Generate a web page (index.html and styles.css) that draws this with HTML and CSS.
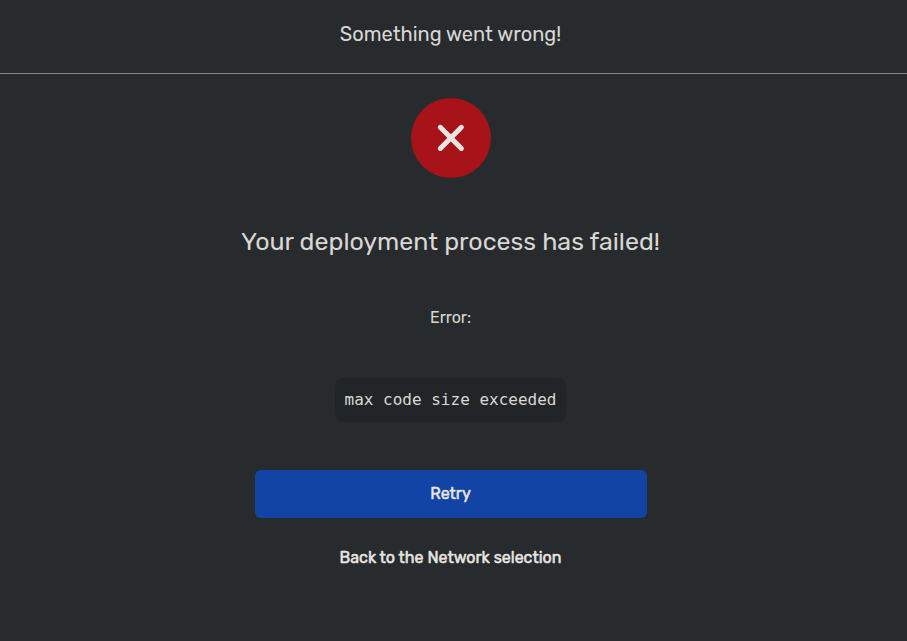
FILE: index.html
```html
<!DOCTYPE html>
<html lang="en">
<head>
<meta charset="utf-8">
<title>Something went wrong!</title>
<link rel="stylesheet" href="styles.css">
</head>
<body>
<header class="header"><h1 class="title">Something went wrong!</h1></header>
<main class="content">
<div class="status"><svg viewBox="0 0 80 80" width="80" height="80"><path d="M29.3 29.3L50.4 50.4M50.4 29.3L29.3 50.4"/></svg></div>
<h2 class="heading">Your deployment process has failed!</h2>
<p class="label">Error:</p>
<code class="message">max code size exceeded</code>
<button class="btn primary">Retry</button>
<button class="btn link">Back to the Network selection</button>
</main>
</body>
</html>
```
FILE: styles.css
```css
* { box-sizing: border-box; }
body { margin: 0; height: 641px; overflow: hidden; background: #282b2e; color: #d9d7d3; font-family: Rubik, Roboto, sans-serif; }
.header { height: 74px; padding: 22px 6px 0 0; border-bottom: 1px solid #8b867c; text-align: center; }
.title { margin: 0; font-size: 20px; line-height: 24px; font-weight: 400; }
.content { display: flex; flex-direction: column; align-items: center; padding: 24px 6px 0 0; }
.status { width: 80px; height: 80px; border-radius: 50%; background: #a71319; }
.status svg { display: block; fill: none; stroke: #e8e6e1; stroke-width: 5; stroke-linecap: round; }
.heading { margin: 48px 0 0; font-size: 25px; line-height: 32px; font-weight: 400; }
.label { margin: 50px 0 0; font-size: 16px; line-height: 20px; }
.message { width: 231px; height: 44px; margin-top: 50px; border-radius: 8px; background: #222527; font: 16px/44px "DejaVu Sans Mono", monospace; text-align: center; white-space: nowrap; }
.btn { width: 392px; height: 48px; border: 0; border-radius: 6px; padding: 0 0 2px; color: #e8e6e1; font-family: inherit; font-size: 16px; font-weight: 400; -webkit-text-stroke: 0.5px currentColor; }
.primary { margin-top: 48px; background: #1144a5; }
.link { margin-top: 16px; background: none; }
```
